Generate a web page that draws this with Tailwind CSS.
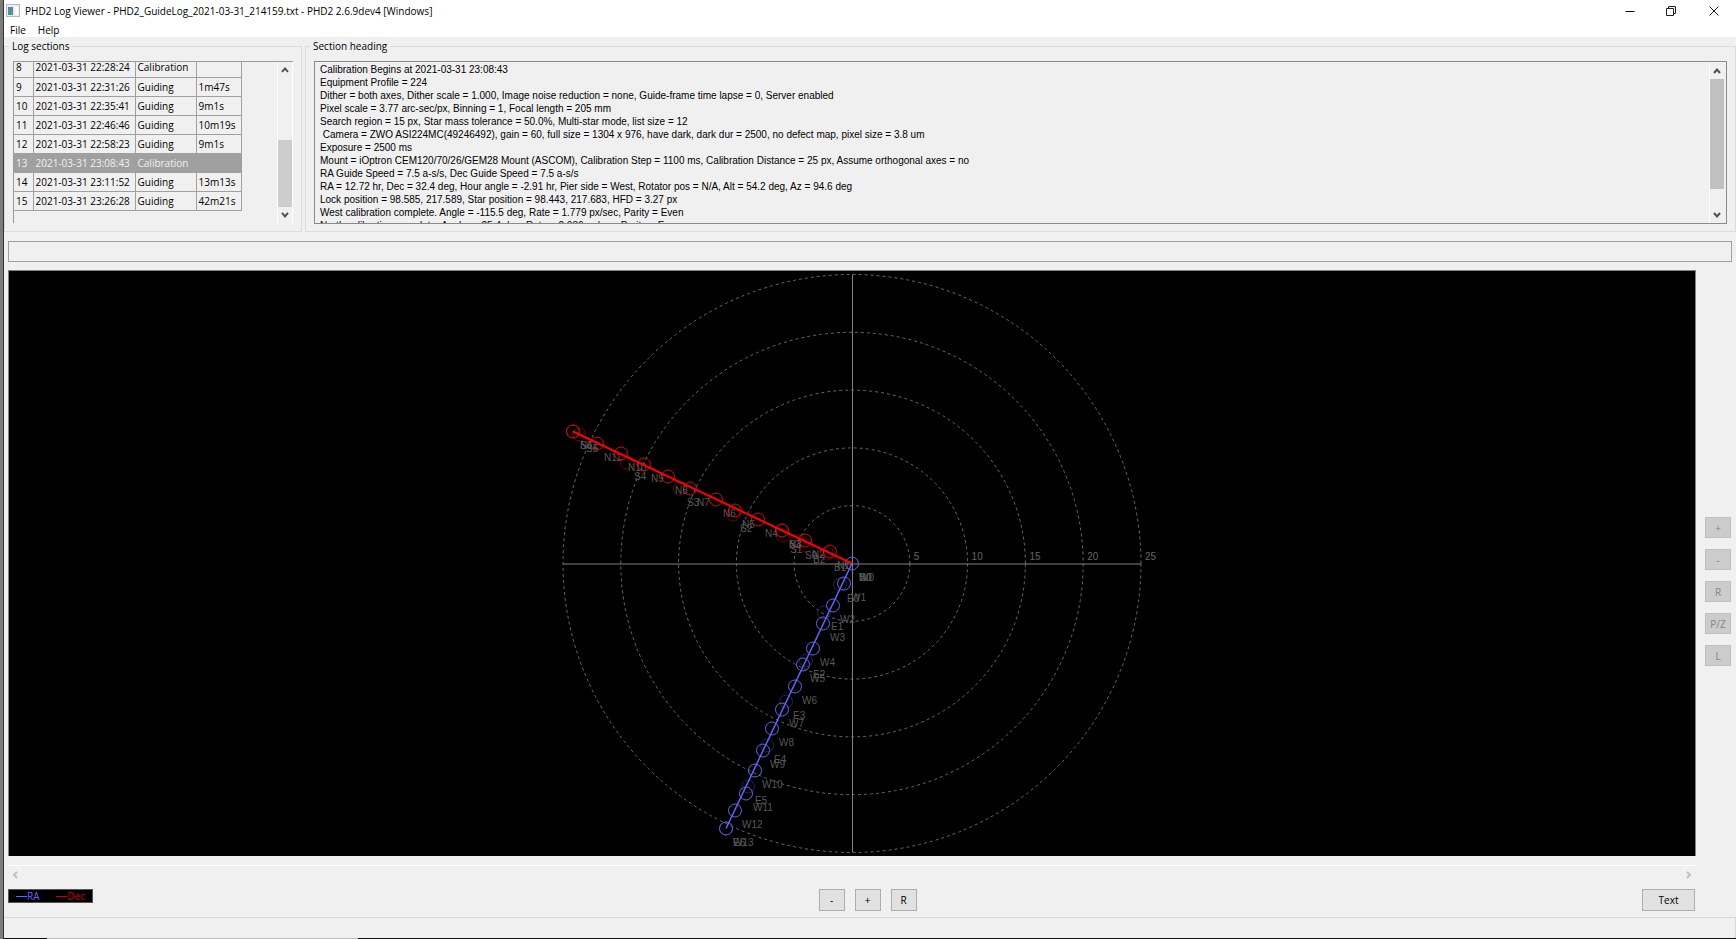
<!DOCTYPE html>
<html lang="en">
<head>
  <meta charset="UTF-8" />
  <meta name="viewport" content="width=device-width, initial-scale=1" />
  <title>PHD2 Log Viewer</title>
  <script src="https://cdn.jsdelivr.net/npm/@tailwindcss/browser@4"></script>
</head>
<body class="h-screen overflow-hidden flex flex-col bg-[#f0f0f0] text-black text-[10px] leading-[18px] font-['Open_Sans','Noto_Sans',sans-serif] border-l-3 border-[#7d7a77]">
  <div class="flex-1 min-h-0 flex flex-col border-l border-[#333]">

    <!-- title bar -->
    <header class="bg-white">
      <div class="h-[21px] flex items-center pl-[2px]">
        <svg class="w-[14px] h-[13px] mr-[5px]" viewBox="0 0 14 13">
          <rect x="0.5" y="0.5" width="13" height="12" fill="#e8eef0" stroke="#b5bcc0" />
          <rect x="2" y="3" width="5" height="8" fill="#4f9490" />
          <rect x="2" y="3" width="5" height="3" fill="#5c7fa0" />
          <rect x="9" y="3" width="3" height="8" fill="#ffffff" />
        </svg>
        <h1>PHD2 Log Viewer - PHD2_GuideLog_2021-03-31_214159.txt - PHD2 2.6.9dev4 [Windows]</h1>
        <div class="ml-auto flex h-full items-center">
          <button aria-label="Minimize" class="w-[41px] flex justify-center"><svg class="w-[10px] h-[10px]" viewBox="0 0 10 10"><path d="M0.500 5.500H9.500" stroke="#000" /></svg></button>
          <button aria-label="Restore" class="w-[41px] flex justify-center"><svg class="w-[10px] h-[10px]" viewBox="0 0 10 10" fill="none" stroke="#222"><path d="M0.500 2.500H7.500V9.500H0.500ZM2.500 2.500V0.500H9.500V7.500H7.500" /></svg></button>
          <button aria-label="Close" class="w-[45px] flex justify-center"><svg class="w-[10px] h-[10px]" viewBox="0 0 10 10"><path d="M0.500 0.500L9.500 9.500M9.500 0.500L0.500 9.500" stroke="#222" /></svg></button>
        </div>
      </div>
      <nav class="h-4 pt-[2px] flex items-center gap-3 pl-[6px]">
        <button>File</button>
        <button>Help</button>
      </nav>
    </header>

    <!-- log list and heading -->
    <div class="flex gap-[3px]">
      <fieldset class="w-[298px] h-[195px] border border-[#dcdcdc] px-2 min-w-0">
        <legend class="px-[3px] -ml-1">Log sections</legend>
        <div class="mt-[6px] h-[162px] flex justify-between overflow-hidden border-t border-l border-[#9a9a9a]">
          <div class="h-full overflow-hidden flex flex-col">
            <table class="w-[227px] table-fixed border-collapse -mt-[4px] [&_td]:border-r [&_td]:border-b [&_td]:border-[#a0a0a0] [&_td]:h-[19px] [&_td]:py-0 [&_td]:px-[2px] [&_td]:whitespace-nowrap">
              <colgroup><col class="w-[19px]" /><col class="w-[102px]" /><col class="w-[61px]" /><col class="w-[45px]" /></colgroup>
              <tbody>
                <tr><td>8</td><td>2021-03-31 22:28:24</td><td>Calibration</td><td></td></tr>
                <tr><td>9</td><td>2021-03-31 22:31:26</td><td>Guiding</td><td>1m47s</td></tr>
                <tr><td>10</td><td>2021-03-31 22:35:41</td><td>Guiding</td><td>9m1s</td></tr>
                <tr><td>11</td><td>2021-03-31 22:46:46</td><td>Guiding</td><td>10m19s</td></tr>
                <tr><td>12</td><td>2021-03-31 22:58:23</td><td>Guiding</td><td>9m1s</td></tr>
                <tr class="bg-[#a0a0a0] text-[#f0f0f0]"><td>13</td><td>2021-03-31 23:08:43</td><td>Calibration</td><td></td></tr>
                <tr><td>14</td><td>2021-03-31 23:11:52</td><td>Guiding</td><td>13m13s</td></tr>
                <tr><td>15</td><td>2021-03-31 23:26:28</td><td>Guiding</td><td>42m21s</td></tr>
              </tbody>
            </table>
          </div>
          <div class="w-4 flex flex-col items-center border-x border-white">
            <svg class="w-[8px] h-[17px]" viewBox="0 0 8 17" fill="none" stroke="#505050" stroke-width="2"><path d="M1 10L4 6.500L7 10" /></svg>
            <div class="mt-[61px] h-[68px] w-full bg-[#cdcdcd]"></div>
            <svg class="w-[8px] h-[16px]" viewBox="0 0 8 16" fill="none" stroke="#505050" stroke-width="2"><path d="M1 6L4 9.500L7 6" /></svg>
          </div>
        </div>
      </fieldset>

      <fieldset class="flex-1 h-[195px] border border-[#dcdcdc] px-2 min-w-0">
        <legend class="px-[3px] -ml-1">Section heading</legend>
        <div class="mt-[6px] h-[163px] flex border border-[#8a8a8a] pr-[2px]">
          <textarea readonly aria-label="Section heading" class="flex-1 resize-none overflow-hidden pl-[5px] pt-px text-[10px] leading-[13px] font-['Liberation_Sans',Arial,sans-serif] outline-none whitespace-pre">Calibration Begins at 2021-03-31 23:08:43
Equipment Profile = 224
Dither = both axes, Dither scale = 1.000, Image noise reduction = none, Guide-frame time lapse = 0, Server enabled
Pixel scale = 3.77 arc-sec/px, Binning = 1, Focal length = 205 mm
Search region = 15 px, Star mass tolerance = 50.0%, Multi-star mode, list size = 12
 Camera = ZWO ASI224MC(49246492), gain = 60, full size = 1304 x 976, have dark, dark dur = 2500, no defect map, pixel size = 3.8 um
Exposure = 2500 ms
Mount = iOptron CEM120/70/26/GEM28 Mount (ASCOM), Calibration Step = 1100 ms, Calibration Distance = 25 px, Assume orthogonal axes = no
RA Guide Speed = 7.5 a-s/s, Dec Guide Speed = 7.5 a-s/s
RA = 12.72 hr, Dec = 32.4 deg, Hour angle = -2.91 hr, Pier side = West, Rotator pos = N/A, Alt = 54.2 deg, Az = 94.6 deg
Lock position = 98.585, 217.589, Star position = 98.443, 217.683, HFD = 3.27 px
West calibration complete. Angle = -115.5 deg, Rate = 1.779 px/sec, Parity = Even
North calibration complete. Angle = -25.4 deg, Rate = 2.036 px/sec, Parity = Even</textarea>
          <div class="w-[15px] flex flex-col items-center border-l border-white">
            <svg class="w-[8px] h-[17px]" viewBox="0 0 8 17" fill="none" stroke="#505050" stroke-width="2"><path d="M1 11L4 7.500L7 11" /></svg>
            <div class="h-[110px] w-full bg-[#c0c0c0]"></div>
            <svg class="mt-auto w-[8px] h-[17px]" viewBox="0 0 8 17" fill="none" stroke="#505050" stroke-width="2"><path d="M1 7L4 10.500L7 7" /></svg>
          </div>
        </div>
      </fieldset>
    </div>

    <div class="mt-[9px] ml-1 mr-1 h-[21px] border border-[#a0a0a0]"></div>

    <!-- graph area -->
    <main class="flex-1 min-h-0 flex pl-1 pr-[5px] pt-2">
      <div class="flex-1 min-w-0 flex flex-col">
        <div class="flex-1 min-h-0 bg-black border-t border-x border-[#808080]">
          <svg class="block w-full h-full" viewBox="-843 -292 1686 584" font-family="Liberation Sans, Arial, sans-serif" font-size="10">
            <g id="rings" fill="none" stroke="#6a6a6a" stroke-dasharray="3 3"></g>
            <path d="M-289 0.500H289M0.500 -289V289" stroke="#808080" />
            <g id="scale" fill="#666"></g>
            <g id="points" fill="none"></g>
            <g id="labels" fill="#585858"></g>
            <path d="M0 0L-279 -132" stroke="#ff0000" stroke-width="2" />
            <path d="M0 0L-126 265" stroke="#6464ff" stroke-width="1.500" />
          </svg>
        </div>
        <div class="mt-[9px] h-[18px] border-t border-white flex items-center justify-between px-1">
          <svg class="w-[7px] h-[8px]" viewBox="0 0 7 8" fill="none" stroke="#bfbfbf" stroke-width="2"><path d="M5 1L2 4L5 7" /></svg>
          <svg class="w-[7px] h-[8px]" viewBox="0 0 7 8" fill="none" stroke="#bfbfbf" stroke-width="2"><path d="M2 1L5 4L2 7" /></svg>
        </div>
        <div class="pt-[6px] pr-px h-[30px] grid grid-cols-[auto_1fr_auto] items-start">
          <div class="w-[85px] h-[14px] bg-black border border-[#555] flex items-center justify-between px-[7px] leading-[12px]">
            <span class="text-[#6464ff]"><span class="inline-block w-[11px] h-px mb-[3px] bg-[#6464ff]"></span>RA</span>
            <span class="text-[#d00000]"><span class="inline-block w-[11px] h-px mb-[3px] bg-[#d00000]"></span>Dec</span>
          </div>
          <div class="flex justify-center gap-[10px]">
            <button class="w-[26px] h-[22px] border border-[#adadad] bg-[#e1e1e1]">-</button>
            <button class="w-[26px] h-[22px] border border-[#adadad] bg-[#e1e1e1]">+</button>
            <button class="w-[26px] h-[22px] border border-[#adadad] bg-[#e1e1e1]">R</button>
          </div>
          <button class="w-[53px] h-[22px] border border-[#adadad] bg-[#e1e1e1]">Text</button>
        </div>
      </div>
      <div class="ml-[9px] flex flex-col justify-center gap-[11px] text-[#838383]">
        <button disabled class="w-[26px] h-[21px] border border-[#bfbfbf] bg-[#cccccc]">+</button>
        <button disabled class="w-[26px] h-[21px] border border-[#bfbfbf] bg-[#cccccc]">-</button>
        <button disabled class="w-[26px] h-[21px] border border-[#bfbfbf] bg-[#cccccc]">R</button>
        <button disabled class="w-[26px] h-[21px] border border-[#bfbfbf] bg-[#cccccc]">P/Z</button>
        <button disabled class="w-[26px] h-[21px] border border-[#bfbfbf] bg-[#cccccc]">L</button>
      </div>
    </main>

    <!-- status bar -->
    <footer class="mt-[4px] h-[21px] border-t border-r border-[#d7d7d7]"></footer>
    <div class="h-px flex bg-[#111]"><div class="ml-[43px] w-[311px] bg-[#bbb]"></div></div>
  </div>

  <script>
    const NS = "http://www.w3.org/2000/svg";

    function add(parent, tag, attrs, text) {
      const el = document.createElementNS(NS, tag);
      for (const [key, value] of Object.entries(attrs)) el.setAttribute(key, value);
      if (text) el.textContent = text;
      document.getElementById(parent).appendChild(el);
    }

    for (let i = 1; i <= 5; i++) {
      add("rings", "circle", { cx: 0, cy: 0, r: i * 57.8 });
      add("scale", "text", { x: i * 57.8 + 4, y: -4 }, String(i * 5));
    }

    // offsets from the lock position, in screen pixels
    const steps = [
      { name: "E", color: "#232358", pts: [[-12, 21], [-28, 49], [-46, 97], [-66, 138], [-85, 182], [-104, 223], [-126, 265]] },
      { name: "S", color: "#700000", pts: [[-54, -22], [-69, -28], [-119, -49], [-172, -75], [-225, -101], [-273, -129], [-279, -132]] },
      { name: "B", color: "#700000", pts: [[0, 0], [-25, -10], [-46, -18], [-70, -33]] },
      { name: "N", color: "#d01010", pts: [[0, 0], [-22, -12], [-47, -23], [-70, -33], [-94, -44], [-117, -53], [-136, -64], [-162, -75], [-184, -87], [-208, -99], [-231, -110], [-255, -120], [-279, -132]] },
      { name: "W", color: "#6464e0", pts: [[0, 0], [-8, 20], [-19, 42], [-29, 60], [-39, 85], [-49, 101], [-57, 123], [-70, 146], [-80, 165], [-89, 187], [-97, 207], [-106, 230], [-117, 247], [-126, 265]] },
    ];
    for (const s of steps) {
      s.pts.forEach(([x, y], i) => {
        // all axes start at the origin, only the west one draws its marker there
        if (i > 0 || x !== 0 || s.name === "W") {
          add("points", "circle", { cx: x, cy: y, r: 6.5, stroke: s.color });
        }
        add("labels", "text", { x: x + 7, y: y + 17 }, s.name + i);
      });
    }
  </script>
</body>
</html>
